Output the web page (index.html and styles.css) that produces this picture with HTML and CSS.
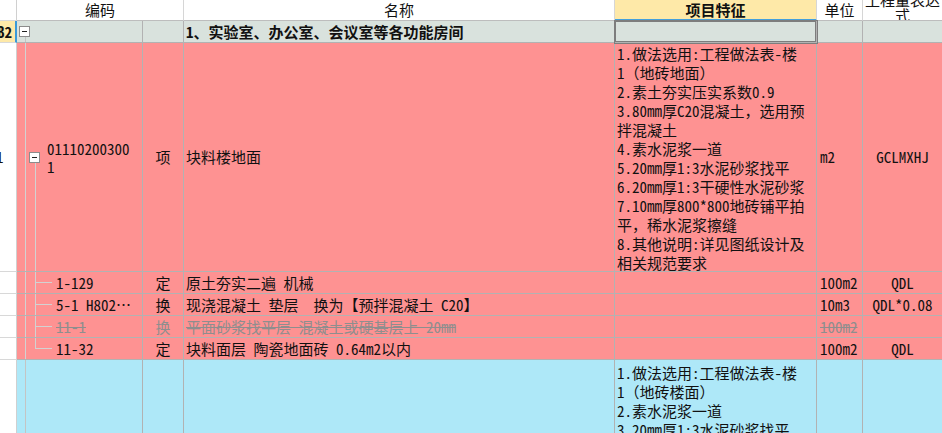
FILE: index.html
```html
<!DOCTYPE html>
<html lang="zh-CN">
<head>
<meta charset="utf-8">
<title>清单</title>
<link rel="stylesheet" href="styles.css">
</head>
<body>
<div class="sheet">
  <div class="row r-hdr">
    <div class="c num hdr"></div>
    <div class="c hdr center span2">编码</div>
    <div class="c hdr center">名称</div>
    <div class="c hdr feat-hdr center">项目特征</div>
    <div class="c hdr center">单位</div>
    <div class="c hdr expr-hdr"><div class="wrap">工程量表达式</div></div>
  </div>

  <div class="row r-grp">
    <div class="c num num-sel"><span class="bold">B2</span></div>
    <div class="c code tree-grp"><span class="box"></span></div>
    <div class="c center"></div>
    <div class="c name bold">1、实验室、办公室、会议室等各功能房间</div>
    <div class="c sel"></div>
    <div class="c"></div>
    <div class="c"></div>
  </div>

  <div class="row r-main pink">
    <div class="c num num-plain"><span class="n1">1</span></div>
    <div class="c code tree-main"><span class="box box-child"></span><span class="code-txt">01110200300<br>1</span></div>
    <div class="c center">项</div>
    <div class="c name">块料楼地面</div>
    <div class="c feat">1.做法选用:工程做法表-楼<br>1（地砖地面）<br>2.素土夯实压实系数0.9<br>3.80mm厚C20混凝土，选用预<br>拌混凝土<br>4.素水泥浆一道<br>5.20mm厚1:3水泥砂浆找平<br>6.20mm厚1:3干硬性水泥砂浆<br>7.10mm厚800*800地砖铺平拍<br>平，稀水泥浆擦缝<br>8.其他说明:详见图纸设计及<br>相关规范要求</div>
    <div class="c unit">m2</div>
    <div class="c center">GCLMXHJ</div>
  </div>

  <div class="row r-sub pink">
    <div class="c num num-plain"></div>
    <div class="c code tree-child">1-129</div>
    <div class="c center">定</div>
    <div class="c name">原土夯实二遍 机械</div>
    <div class="c"></div>
    <div class="c unit">100m2</div>
    <div class="c center">QDL</div>
  </div>

  <div class="row r-sub pink">
    <div class="c num num-plain"></div>
    <div class="c code tree-child">5-1 H802…</div>
    <div class="c center">换</div>
    <div class="c name">现浇混凝土 垫层  换为【预拌混凝土 C20】</div>
    <div class="c"></div>
    <div class="c unit">10m3</div>
    <div class="c center">QDL*0.08</div>
  </div>

  <div class="row r-sub pink">
    <div class="c num num-plain"></div>
    <div class="c code tree-child"><span class="strike">11-1</span></div>
    <div class="c center"><span class="strike nodec">换</span></div>
    <div class="c name"><span class="strike">平面砂浆找平层 混凝土或硬基层上 20mm</span></div>
    <div class="c"></div>
    <div class="c unit"><span class="strike">100m2</span></div>
    <div class="c center"></div>
  </div>

  <div class="row r-sub pink">
    <div class="c num num-plain"></div>
    <div class="c code tree-last">11-32</div>
    <div class="c center">定</div>
    <div class="c name">块料面层 陶瓷地面砖 0.64m2以内</div>
    <div class="c"></div>
    <div class="c unit">100m2</div>
    <div class="c center">QDL</div>
  </div>

  <div class="row r-blue blue">
    <div class="c num num-plain"></div>
    <div class="c code tree-blue"></div>
    <div class="c"></div>
    <div class="c"></div>
    <div class="c feat feat-top">1.做法选用:工程做法表-楼<br>1（地砖楼面）<br>2.素水泥浆一道<br>3.20mm厚1:3水泥砂浆找平</div>
    <div class="c"></div>
    <div class="c"></div>
  </div>
</div>
</body>
</html>
```

FILE: styles.css
```css
html, body {
  margin: 0;
  padding: 0;
  background: #ffffff;
}

.sheet {
  width: 942px;
  height: 433px;
  overflow: hidden;
  font-family: "Noto Sans Mono CJK SC", "Noto Sans CJK SC", "Noto Sans", sans-serif;
  font-size: 15px;
  color: #111;
}

.row {
  display: grid;
  grid-template-columns: 17px 126px 41px 431px 202px 46px 80px;
  width: 943px;
}

.r-hdr { height: 21px; }
.r-grp { height: 22px; background: #d9e2dd; }
.r-main { height: 229px; }
.r-sub { height: 22px; }
.r-blue { height: 80px; }

.pink { background: #fe9292; }
.blue { background: #aee8f8; }

.c {
  box-sizing: border-box;
  border-right: 1px solid #b2b2b2;
  border-bottom: 1px solid #b2b2b2;
  overflow: hidden;
  white-space: nowrap;
  display: flex;
  align-items: center;
  line-height: 18px;
}

.center { justify-content: center; }
.bold { font-weight: bold; }

/* header */
.hdr {
  background: #ffffff;
  border-right-color: #d6d6d6;
  border-bottom-color: #bdbdbd;
}
.span2 { grid-column: span 2; }
.feat-hdr {
  background: #fee9a8;
  font-weight: bold;
  border-bottom: 2px solid #44a0dc;
}
.expr-hdr {
  align-items: flex-start;
  justify-content: center;
  white-space: normal;
  text-align: center;
}
.expr-hdr .wrap {
  width: 76px;
  line-height: 15px;
  margin-top: -8px;
}

/* row number column */
.num {
  background: #ffffff;
  border-right-color: #d0d0d0;
  border-bottom-color: #d8d8d8;
}
.num-sel {
  background: #fee9a8;
  border-right: 2px solid #3a9ad8;
  justify-content: flex-end;
  padding-right: 3px;
}
.num-plain { justify-content: flex-start; }
.n1 { margin-left: -4px; }

/* code column with tree */
.code {
  padding-left: 39px;
  background-repeat: no-repeat;
}
.tree-grp {
  padding-left: 2px;
  background-image: linear-gradient(#c4c4c4, #c4c4c4);
  background-position: 8px 100%;
  background-size: 1px 5px;
}
.tree-main {
  padding-left: 12px;
  background-image:
    linear-gradient(#d2d2d2, #d2d2d2),
    linear-gradient(#d2d2d2, #d2d2d2);
  background-position: 8px 0, 18px 100%;
  background-size: 1px 100%, 1px 108px;
}
.tree-child {
  background-image:
    linear-gradient(#d2d2d2, #d2d2d2),
    linear-gradient(#d2d2d2, #d2d2d2),
    linear-gradient(#d2d2d2, #d2d2d2);
  background-position: 8px 0, 18px 0, 18px 10px;
  background-size: 1px 100%, 1px 100%, 17px 1px;
}
.tree-last {
  background-image:
    linear-gradient(#d2d2d2, #d2d2d2),
    linear-gradient(#d2d2d2, #d2d2d2),
    linear-gradient(#d2d2d2, #d2d2d2);
  background-position: 8px 0, 18px 0, 18px 10px;
  background-size: 1px 100%, 1px 11px, 17px 1px;
}
.tree-blue {
  background-image: linear-gradient(#c4c4c4, #c4c4c4);
  background-position: 8px 0;
  background-size: 1px 100%;
}

.box {
  box-sizing: border-box;
  width: 11px;
  height: 11px;
  flex: none;
  border: 1px solid #8c8c8c;
  background-color: #ffffff;
  background-image: linear-gradient(#222, #222);
  background-repeat: no-repeat;
  background-position: 2px 4px;
  background-size: 5px 1px;
}
.box-child { margin-right: 7px; }
.code-txt { line-height: 18px; margin-top: 2px; }

/* name */
.name {
  padding-left: 2px;
  white-space: pre;
}

/* feature */
.feat {
  align-items: flex-start;
  padding: 1px 0 0 2px;
  line-height: 19px;
}
.feat-top { padding-top: 3px; }
.sel {
  position: relative;
  z-index: 1;
  box-shadow: 0 0 0 1px #7d7d7d, inset 0 0 0 1px #7d7d7d;
}

.unit { padding-left: 3px; }

.strike {
  color: #8e8e8e;
  text-decoration: line-through;
}
.nodec { text-decoration: none; }
```
